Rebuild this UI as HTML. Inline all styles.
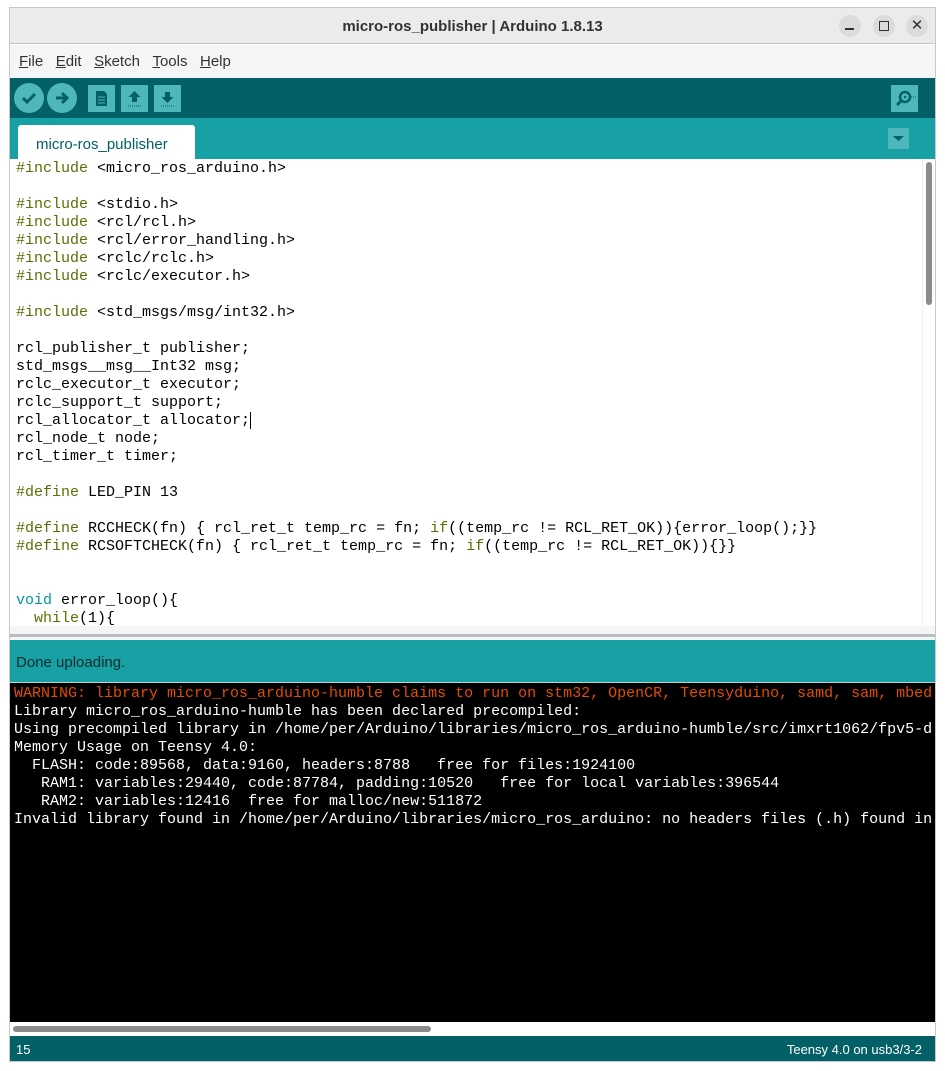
<!DOCTYPE html>
<html><head><meta charset="utf-8"><style>
*{margin:0;padding:0;box-sizing:border-box}
body{width:945px;height:1071px;background:#fff;position:relative;overflow:hidden;font-family:"Liberation Sans",sans-serif}
.a{position:absolute}
.mono{font-family:"Liberation Mono",monospace;font-size:15px;white-space:pre;line-height:18px}
.k{color:#5e6d03}.t{color:#00979c}
.btn{position:absolute;top:84px;width:28px;height:28px;background:#4db7bb}
.cb{border-radius:50%;width:30px;height:30px;top:83px}
</style></head><body>
<div class="a" style="left:9px;top:7px;width:927px;height:1055px;border:1px solid #c8c8c8;background:#fff"></div>
<div class="a" style="left:10px;top:8px;width:925px;height:36px;background:#ebebeb;border-bottom:1px solid #c4c4c4"></div>
<div class="a" style="left:0;top:18px;width:945px;text-align:center;font-weight:bold;font-size:15px;color:#333">micro-ros_publisher | Arduino 1.8.13</div>
<div class="a" style="left:839px;top:15px;width:22px;height:22px;border-radius:50%;background:#dcdcdc"></div>
<div class="a" style="left:845px;top:28px;width:9px;height:1.5px;background:#333"></div>
<div class="a" style="left:873px;top:15px;width:22px;height:22px;border-radius:50%;background:#dcdcdc"></div>
<div class="a" style="left:879px;top:21px;width:10px;height:10px;border:1.5px solid #333"></div>
<div class="a" style="left:906px;top:15px;width:22px;height:22px;border-radius:50%;background:#dcdcdc;text-align:center;font-size:15px;line-height:22px;color:#333">✕</div>
<div class="a" style="left:10px;top:45px;width:925px;height:33px;background:#f4f5f7"></div>
<div class="a" style="left:19px;top:53px;font-size:15px;color:#333;word-spacing:0"><u>F</u>ile&nbsp;&nbsp;&nbsp;<u>E</u>dit&nbsp;&nbsp;&nbsp;<u>S</u>ketch&nbsp;&nbsp;&nbsp;<u>T</u>ools&nbsp;&nbsp;&nbsp;<u>H</u>elp</div>
<div class="a" style="left:10px;top:78px;width:925px;height:40px;background:#026066"></div>
<div class="btn cb" style="left:14px"><svg width="30" height="30"><path d="M9 15l4 4 8-8" stroke="#026066" stroke-width="3" fill="none"/></svg></div>
<div class="btn cb" style="left:47px"><svg width="30" height="30"><path d="M9 15h10M15 10l5 5-5 5" stroke="#026066" stroke-width="3" fill="none"/></svg></div>
<div class="btn" style="left:88px;top:85px;width:27px;height:27px"><svg width="27" height="27"><path d="M8 6h8l3 3v12H8z" fill="#026066"/><path d="M10 12h7M10 15h7M10 18h7" stroke="#4db7bb"/></svg></div>
<div class="btn" style="left:121px;top:85px;width:27px;height:27px"><svg width="27" height="27"><path d="M13.5 6l6 6h-3.5v5h-5v-5H7.5z" fill="#026066"/><path d="M7 21h13" stroke="#026066" stroke-dasharray="1 1"/></svg></div>
<div class="btn" style="left:154px;top:85px;width:27px;height:27px"><svg width="27" height="27"><path d="M13.5 18l6-6h-3.5V7h-5v5H7.5z" fill="#026066"/><path d="M7 21h13" stroke="#026066" stroke-dasharray="1 1"/></svg></div>
<div class="btn" style="left:891px;top:85px;width:27px;height:27px"><svg width="27" height="27"><circle cx="14" cy="12" r="5" stroke="#026066" stroke-width="2.5" fill="none"/><circle cx="14" cy="12" r="1.2" fill="#026066"/><path d="M10 16l-4 4" stroke="#026066" stroke-width="3"/><path d="M20 12h5" stroke="#026066" stroke-dasharray="1 1"/></svg></div>
<div class="a" style="left:10px;top:118px;width:925px;height:41px;background:#17a1a5"></div>
<div class="a" style="left:18px;top:125px;width:177px;height:34px;background:#fff;border-radius:3px 3px 0 0"></div>
<div class="a" style="left:36px;top:136px;font-size:15px;color:#026066">micro-ros_publisher</div>
<div class="a" style="left:888px;top:128px;width:21px;height:21px;background:#4db7bb"><svg width="21" height="21"><path d="M5 8h11l-5.5 5z" fill="#026066"/></svg></div>
<div class="a" style="left:922px;top:159px;width:1px;height:475px;background:#eee"></div>
<div class="a" style="left:926px;top:162px;width:6px;height:143px;border-radius:3px;background:#8c8c8c"></div>
<div class="a mono" style="left:16px;top:160px;color:#000"><span class="k">#include</span> &lt;micro_ros_arduino.h&gt;

<span class="k">#include</span> &lt;stdio.h&gt;
<span class="k">#include</span> &lt;rcl/rcl.h&gt;
<span class="k">#include</span> &lt;rcl/error_handling.h&gt;
<span class="k">#include</span> &lt;rclc/rclc.h&gt;
<span class="k">#include</span> &lt;rclc/executor.h&gt;

<span class="k">#include</span> &lt;std_msgs/msg/int32.h&gt;

rcl_publisher_t publisher;
std_msgs__msg__Int32 msg;
rclc_executor_t executor;
rclc_support_t support;
rcl_allocator_t allocator;<span style="border-left:1.5px solid #000"></span>
rcl_node_t node;
rcl_timer_t timer;

<span class="k">#define</span> LED_PIN 13

<span class="k">#define</span> RCCHECK(fn) { rcl_ret_t temp_rc = fn; <span class="k">if</span>((temp_rc != RCL_RET_OK)){error_loop();}}
<span class="k">#define</span> RCSOFTCHECK(fn) { rcl_ret_t temp_rc = fn; <span class="k">if</span>((temp_rc != RCL_RET_OK)){}}


<span class="t">void</span> error_loop(){
  <span class="k">while</span>(1){</div>
<div class="a" style="left:10px;top:626px;width:925px;height:8px;background:#f4f5f7"></div>
<div class="a" style="left:10px;top:634px;width:925px;height:3px;background:#bdbdbd"></div>
<div class="a" style="left:10px;top:637px;width:925px;height:3px;background:#f4f5f7"></div>
<div class="a" style="left:10px;top:640px;width:925px;height:42px;background:#17a1a5"></div>
<div class="a" style="left:16px;top:654px;font-size:15px;color:#0b2b2d">Done uploading.</div>
<div class="a" style="left:10px;top:682px;width:925px;height:340px;background:#000;border-top:1px solid #ccc;overflow:hidden">
<div class="a mono" style="left:4px;top:2px;color:#fff"><span style="color:#e34c00">WARNING: library micro_ros_arduino-humble claims to run on stm32, OpenCR, Teensyduino, samd, sam, mbed</span>
Library micro_ros_arduino-humble has been declared precompiled:
Using precompiled library in /home/per/Arduino/libraries/micro_ros_arduino-humble/src/imxrt1062/fpv5-d
Memory Usage on Teensy 4.0:
  FLASH: code:89568, data:9160, headers:8788   free for files:1924100
   RAM1: variables:29440, code:87784, padding:10520   free for local variables:396544
   RAM2: variables:12416  free for malloc/new:511872
Invalid library found in /home/per/Arduino/libraries/micro_ros_arduino: no headers files (.h) found in</div></div>
<div class="a" style="left:10px;top:1022px;width:925px;height:14px;background:#fff"></div>
<div class="a" style="left:13px;top:1026px;width:418px;height:6px;border-radius:3px;background:#8c8c8c"></div>
<div class="a" style="left:10px;top:1036px;width:925px;height:25px;background:#026066"></div>
<div class="a" style="left:16px;top:1042px;font-size:13px;color:#fff">15</div>
<div class="a" style="left:700px;top:1042px;width:222px;text-align:right;font-size:13px;color:#fff">Teensy 4.0 on usb3/3-2</div>
</body></html>
